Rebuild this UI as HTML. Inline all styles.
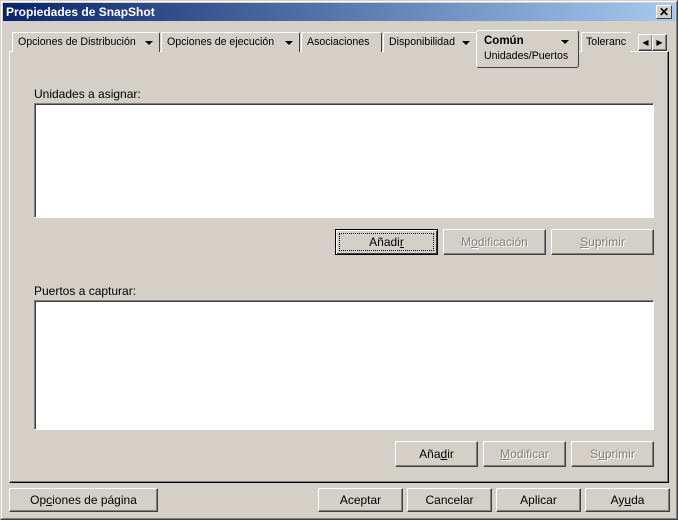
<!DOCTYPE html>
<html><head><meta charset="utf-8"><style>
*{box-sizing:border-box;margin:0;padding:0}
body{width:678px;height:520px;background:#d4d0c8;font-family:"Liberation Sans",Arial,sans-serif;font-size:11px;color:#000;position:relative;overflow:hidden}
.abs{position:absolute}
.win{left:0;top:0;width:678px;height:520px;border:1px solid;border-color:#d4d0c8 #404040 #404040 #d4d0c8}
.win2{left:1px;top:1px;width:676px;height:518px;border:1px solid;border-color:#fff #808080 #808080 #fff}
.title{left:3px;top:3px;width:672px;height:18px;background:linear-gradient(to right,#0a246a,#a6caf0);color:#fff;font-weight:bold;font-size:12px;line-height:18px;padding-left:3px}
.close{left:656px;top:5px;width:16px;height:14px;background:#d4d0c8;border:1px solid;border-color:#fff #404040 #404040 #fff;font-size:12px;line-height:12px;text-align:center;color:#000;font-weight:bold}
.panel{left:9px;top:51px;width:660px;height:432px;border:1px solid;border-color:#fff #000 #000 #fff;box-shadow:inset -1px -1px 0 #808080}
.tab{top:32px;height:20px;border:1px solid;border-color:#fff #404040 transparent #fff;border-bottom:none;border-radius:2px 2px 0 0;line-height:18px;padding-left:5px;white-space:nowrap;background:#d4d0c8;font-size:10.6px}
.arr{position:absolute;right:6px;top:8px;width:0;height:0;border-left:4px solid transparent;border-right:4px solid transparent;border-top:4px solid #000}
.box{background:#fff;border:1px solid;border-color:#808080 #fff #fff #808080;box-shadow:inset 1px 1px 0 #404040}
.btn{height:26px;border:1px solid;border-color:#fff #404040 #404040 #fff;box-shadow:inset -1px -1px 0 #808080;text-align:center;line-height:24px;font-size:12px}
.dis{color:#808080;text-shadow:1px 1px 0 #fff}
u{text-decoration:underline}
</style></head><body>
<div class="abs win"></div><div class="abs win2"></div>
<div class="abs title">Propiedades de SnapShot</div>
<div class="abs close">✕</div>
<div class="abs panel"></div>
<div class="abs tab" style="left:12px;width:148px">Opciones de Distribución<span class="arr" style="right:6px"></span></div>
<div class="abs tab" style="left:161px;width:139px">Opciones de ejecución<span class="arr"></span></div>
<div class="abs tab" style="left:301px;width:81px">Asociaciones</div>
<div class="abs tab" style="left:383px;width:94px">Disponibilidad<span class="arr"></span></div>
<div class="abs tab" style="left:581px;width:50px;border-right:none;padding-left:4px;overflow:hidden">Toleranc</div>
<div class="abs" style="left:476px;top:30px;width:103px;height:38px;border:1px solid;border-color:#fff #404040 #404040 #fff;border-radius:3px;background:#d4d0c8;padding:4px 0 0 7px;line-height:13px">
<b style="font-size:11.5px">Común</b><span class="arr" style="right:9px;top:9px"></span><br><span style="line-height:17px;font-size:10.6px">Unidades/Puertos</span></div>
<div class="abs btn" style="left:638px;top:34px;width:15px;height:17px;line-height:15px;font-size:8px">◀</div>
<div class="abs btn" style="left:652px;top:34px;width:15px;height:17px;line-height:15px;font-size:8px">▶</div>
<div class="abs" style="left:34px;top:87px;font-size:12px">Unidades a asignar:</div>
<div class="abs box" style="left:34px;top:103px;width:620px;height:115px"></div>
<div class="abs btn" style="left:335px;top:229px;width:103px;border:1px solid #000;box-shadow:inset 1px 1px 0 #fff,inset -1px -1px 0 #404040"><span style="display:block;margin:3px;border:1px dotted #000;line-height:16px">Añadi<u>r</u></span></div>
<div class="abs btn dis" style="left:443px;top:229px;width:103px">M<u>o</u>dificación</div>
<div class="abs btn dis" style="left:551px;top:229px;width:103px"><u>S</u>uprimir</div>
<div class="abs" style="left:34px;top:284px;font-size:12px">Puertos a capturar:</div>
<div class="abs box" style="left:34px;top:300px;width:620px;height:130px"></div>
<div class="abs btn" style="left:395px;top:441px;width:83px">Aña<u>d</u>ir</div>
<div class="abs btn dis" style="left:483px;top:441px;width:83px"><u>M</u>odificar</div>
<div class="abs btn dis" style="left:571px;top:441px;width:83px">S<u>u</u>primir</div>
<div class="abs btn" style="left:9px;top:488px;width:149px;height:24px;line-height:22px">Op<u>c</u>iones de página</div>
<div class="abs btn" style="left:318px;top:488px;width:85px;height:24px;line-height:22px">Aceptar</div>
<div class="abs btn" style="left:407px;top:488px;width:85px;height:24px;line-height:22px">Cancelar</div>
<div class="abs btn" style="left:496px;top:488px;width:85px;height:24px;line-height:22px">Aplicar</div>
<div class="abs btn" style="left:585px;top:488px;width:85px;height:24px;line-height:22px">Ay<u>u</u>da</div>
</body></html>
